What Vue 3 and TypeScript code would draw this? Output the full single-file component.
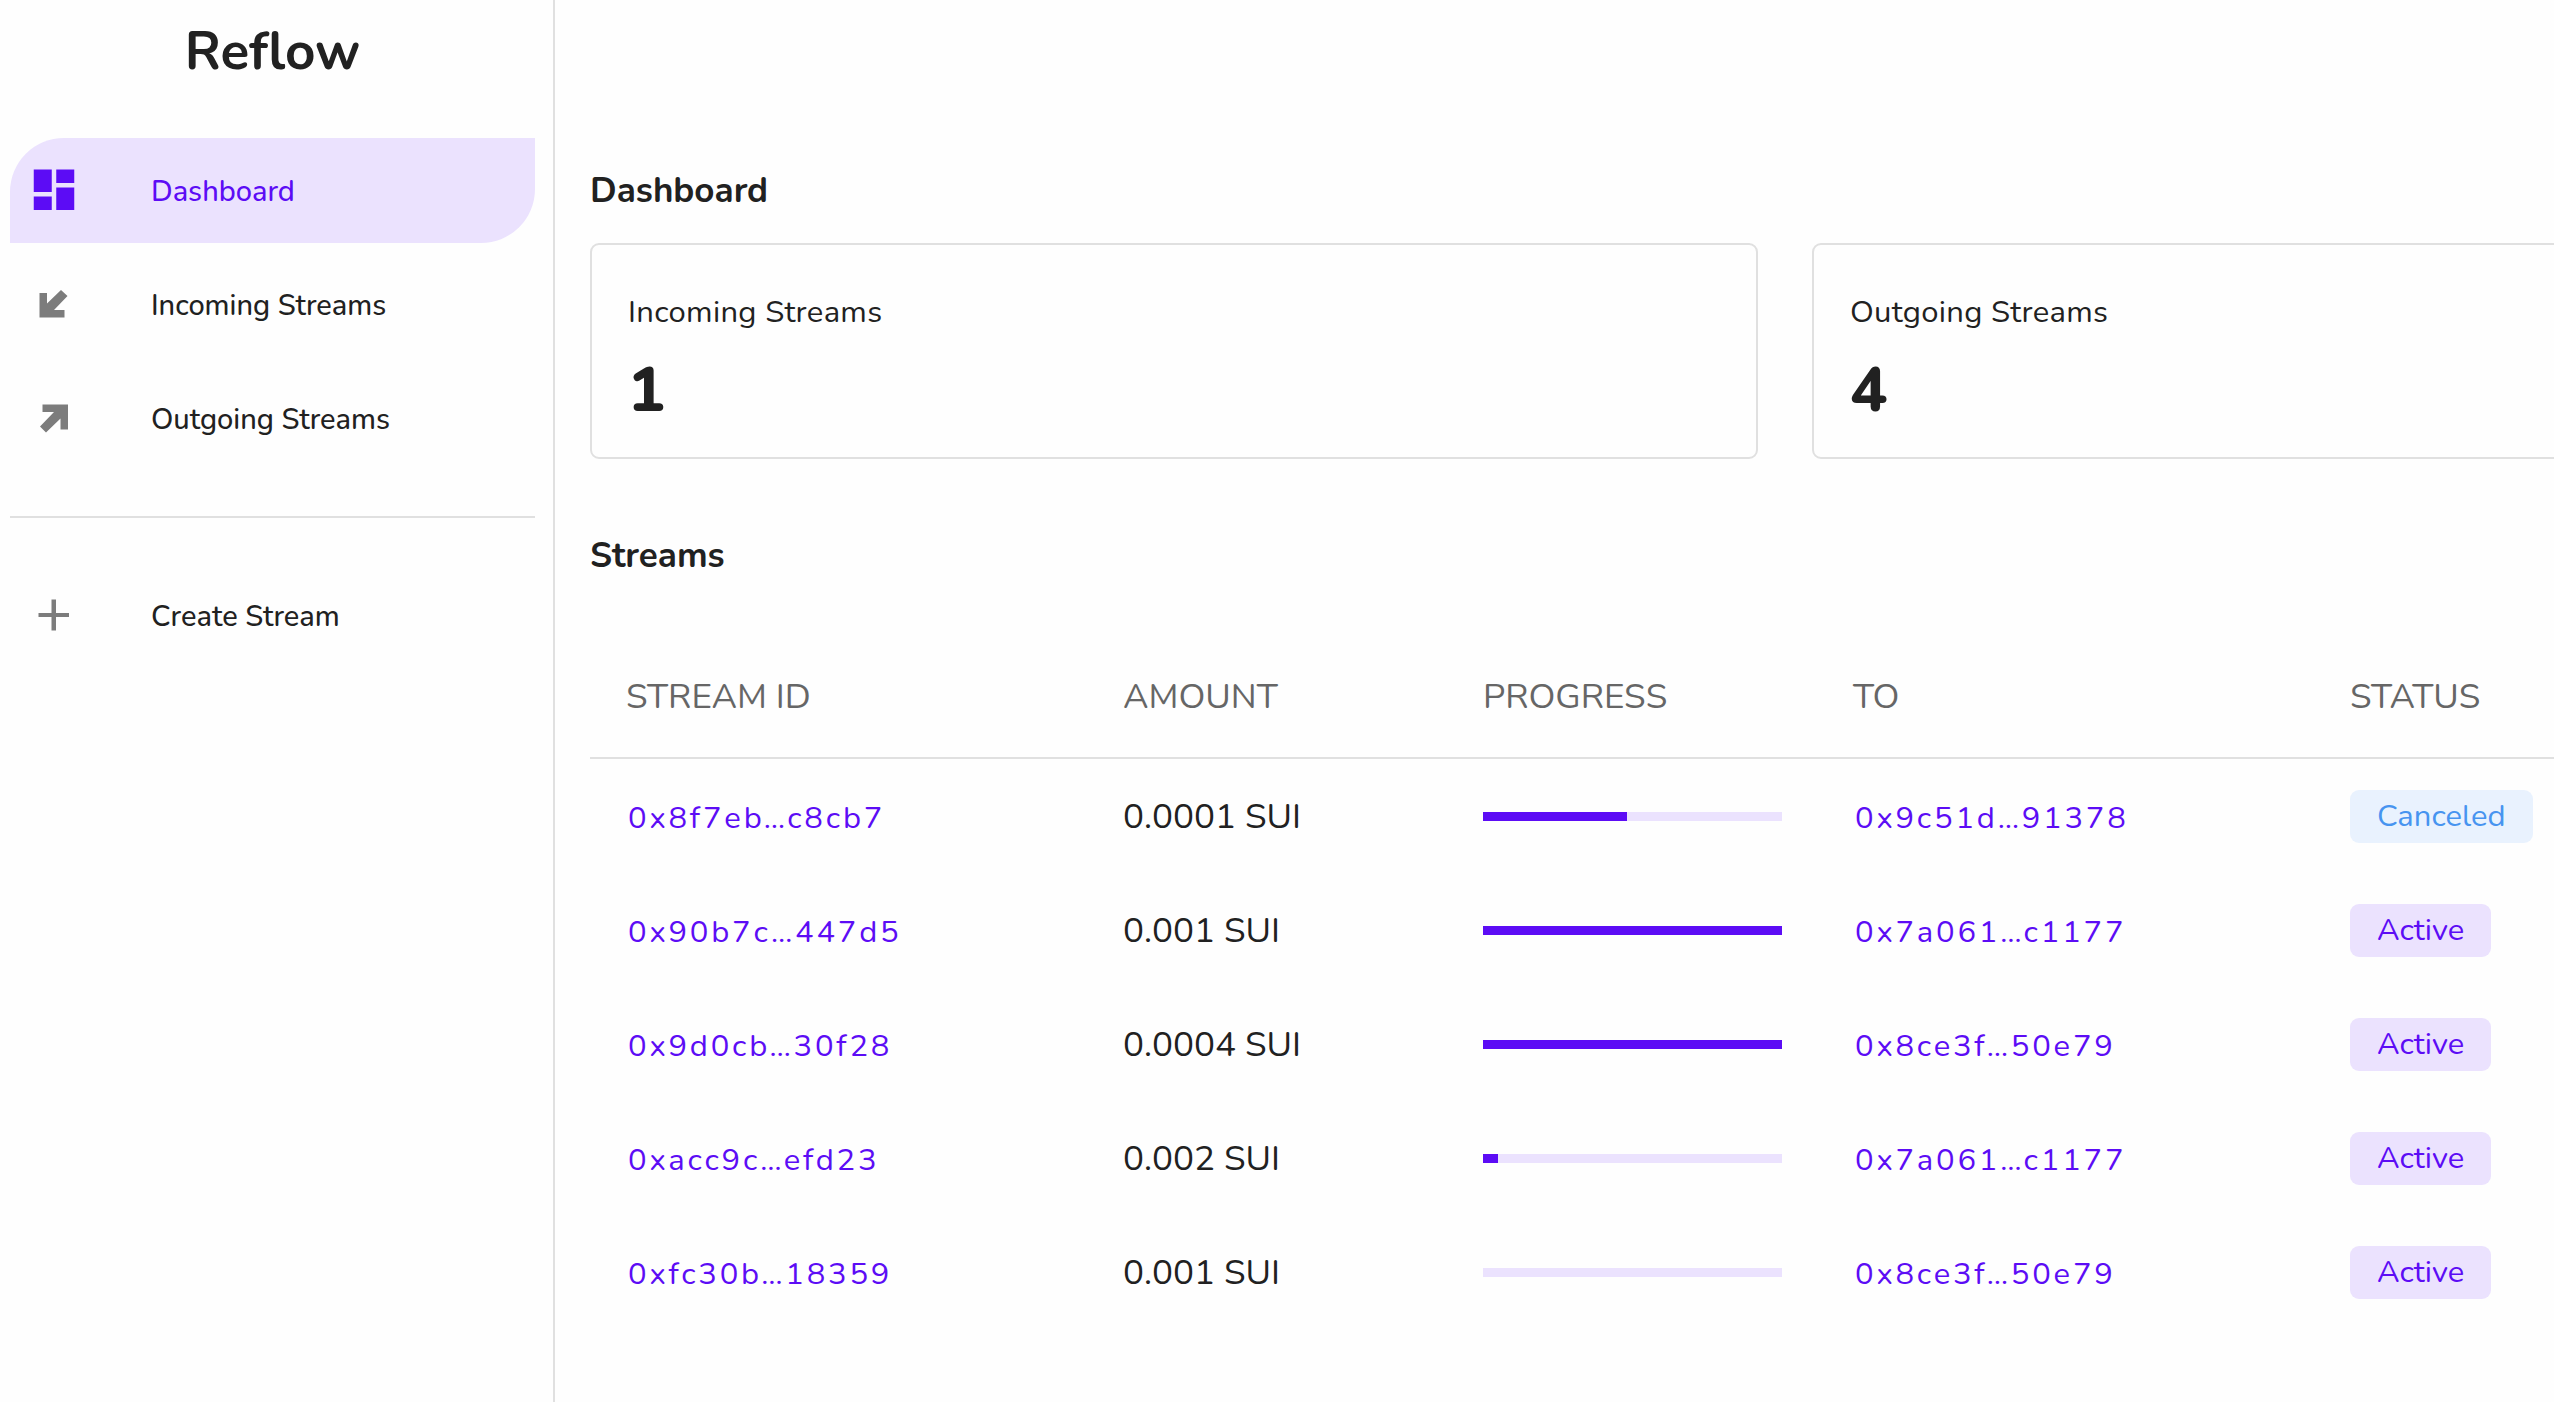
<script setup lang="ts">
interface Stream {
  id: string
  amount: string
  progress: number
  to: string
  status: 'Active' | 'Canceled'
}

const columns = ['STREAM ID', 'AMOUNT', 'PROGRESS', 'TO', 'STATUS']

const cards = [
  { label: 'Incoming Streams', value: 1 },
  { label: 'Outgoing Streams', value: 4 },
]

const streams: Stream[] = [
  { id: '0x8f7eb…c8cb7', amount: '0.0001 SUI', progress: 48, to: '0x9c51d…91378', status: 'Canceled' },
  { id: '0x90b7c…447d5', amount: '0.001 SUI', progress: 100, to: '0x7a061…c1177', status: 'Active' },
  { id: '0x9d0cb…30f28', amount: '0.0004 SUI', progress: 100, to: '0x8ce3f…50e79', status: 'Active' },
  { id: '0xacc9c…efd23', amount: '0.002 SUI', progress: 5, to: '0x7a061…c1177', status: 'Active' },
  { id: '0xfc30b…18359', amount: '0.001 SUI', progress: 0, to: '0x8ce3f…50e79', status: 'Active' },
]
</script>

<template>
  <div class="app">
    <aside class="sidebar">
      <div class="brand">Reflow</div>
      <nav aria-label="Main">
        <a class="item active" href="#dashboard" aria-current="page">
          <svg class="icon" viewBox="0 1 24 24" aria-hidden="true">
            <path d="M3 13h8V3H3v10zm0 8h8v-6H3v6zm10 0h8V11h-8v10zm0-18v6h8V3h-8z" />
          </svg>
          <span>Dashboard</span>
        </a>
        <a class="item" href="#incoming">
          <svg class="icon" viewBox="0 1 54 54" aria-hidden="true">
            <path d="M12.5 15H20v10.5L34 12l6.5 6L27 32h10.5v7.5h-25z" />
          </svg>
          <span>Incoming Streams</span>
        </a>
        <a class="item" href="#outgoing">
          <svg class="icon" viewBox="0 1 54 54" aria-hidden="true">
            <path d="M15.5 12.5H41v25h-7.5v-11l-14.5 14-6-6L27 20H15.5z" />
          </svg>
          <span>Outgoing Streams</span>
        </a>
        <hr class="divider" />
        <a class="item" href="#create">
          <svg class="icon" viewBox="0 1 54 54" aria-hidden="true">
            <path d="M24.500 10.500h4.500v13.500h13v4H29v13.500h-4.500V28H11.500v-4h13z" />
          </svg>
          <span>Create Stream</span>
        </a>
      </nav>
    </aside>

    <main class="main">
      <h1 class="heading">Dashboard</h1>
      <div class="cards">
        <section v-for="card in cards" :key="card.label" class="card">
          <div class="card-label">{{ card.label }}</div>
          <div class="card-value">{{ card.value }}</div>
        </section>
      </div>

      <h2 class="heading">Streams</h2>
      <table class="streams">
        <colgroup>
          <col class="col-id" />
          <col class="col-amount" />
          <col class="col-progress" />
          <col class="col-to" />
          <col />
        </colgroup>
        <thead>
          <tr>
            <th v-for="column in columns" :key="column" scope="col">{{ column }}</th>
          </tr>
        </thead>
        <tbody>
          <tr v-for="stream in streams" :key="stream.id">
            <td><a class="address" :href="'#' + stream.id">{{ stream.id }}</a></td>
            <td>{{ stream.amount }}</td>
            <td>
              <div class="track" role="progressbar" aria-label="Progress" :aria-valuenow="stream.progress">
                <div class="fill" :style="{ width: stream.progress + '%' }"></div>
              </div>
            </td>
            <td><a class="address" :href="'#' + stream.to">{{ stream.to }}</a></td>
            <td><span class="chip" :class="stream.status.toLowerCase()">{{ stream.status }}</span></td>
          </tr>
        </tbody>
      </table>
    </main>
  </div>
</template>

<style>
body {
  margin: 0;
  background: #fefefe;
  overflow: hidden;
}
</style>

<style scoped>
.app {
  display: flex;
  min-height: 100vh;
  color: #212121;
  font-family: Nunito, Lato, sans-serif;
  font-size: 35px;
}

a {
  color: inherit;
  text-decoration: none;
}

.sidebar {
  box-sizing: border-box;
  flex: 0 0 555px;
  padding: 0 18px 0 10px;
  border-right: 2px solid #e0e0e0;
}

.brand {
  height: 104px;
  margin-bottom: 34px;
  font-size: 53px;
  line-height: 104px;
  font-weight: 700;
  text-align: center;
}

.item {
  display: flex;
  box-sizing: border-box;
  align-items: center;
  gap: 70px;
  height: 105px;
  margin-bottom: 9px;
  padding: 2px 0 0 17px;
  border-radius: 54px 0;
  font-size: 29px;
  line-height: 44px;
  font-weight: 500;
}

.item.active {
  background: #ebe2fe;
  color: #5c0cf5;
}

.icon {
  flex: none;
  width: 54px;
  height: 54px;
  fill: #7c7c7c;
}

.active .icon {
  fill: #5c0cf5;
}

.divider {
  height: 2px;
  margin: 45px 0;
  border: 0;
  background: #e0e0e0;
}

.main {
  flex: 1;
  min-width: 0;
  padding: 166px 0 0 35px;
  overflow: hidden;
}

.heading {
  margin: 0;
  font-size: 35px;
  line-height: 50px;
  font-weight: 700;
}

.cards {
  display: grid;
  grid-template-columns: repeat(2, minmax(1168px, 1fr));
  gap: 54px;
  margin: 27px 0 72px;
}

.card {
  box-sizing: border-box;
  padding: 41px 36px 32px;
  border: 2px solid #e0e0e0;
  border-radius: 9px;
}

.card-label {
  font-size: 31px;
  line-height: 52px;
  letter-spacing: 0.01em;
}

.card-value {
  margin-top: 19px;
  font-size: 62px;
  line-height: 68px;
  font-weight: 800;
}

.streams {
  width: 100%;
  min-width: 2390px;
  margin-top: 54px;
  table-layout: fixed;
  border-collapse: collapse;
}

.col-id {
  width: 497px;
}

.col-amount {
  width: 360px;
}

.col-progress {
  width: 370px;
}

.col-to {
  width: 497px;
}

th {
  height: 122px;
  padding: 0 35px 0 36px;
  border-bottom: 2px solid #e0e0e0;
  color: #666;
  font-weight: 400;
  text-align: left;
}

td {
  height: 114px;
  padding: 0 35px 0 36px;
}

.address {
  margin-left: 2px;
  color: #5c0cf5;
  font-size: 31px;
  letter-spacing: 0.09em;
}

.track {
  height: 9px;
  background: #ebe2fe;
}

.fill {
  height: 100%;
  background: #5c0cf5;
}

.chip {
  display: inline-block;
  padding: 0 27px;
  border-radius: 9px;
  font-size: 31px;
  line-height: 53px;
}

.chip.active {
  background: #ebe2fe;
  color: #5c0cf5;
}

.chip.canceled {
  background: #e9f2fe;
  color: #4794f0;
}
</style>
